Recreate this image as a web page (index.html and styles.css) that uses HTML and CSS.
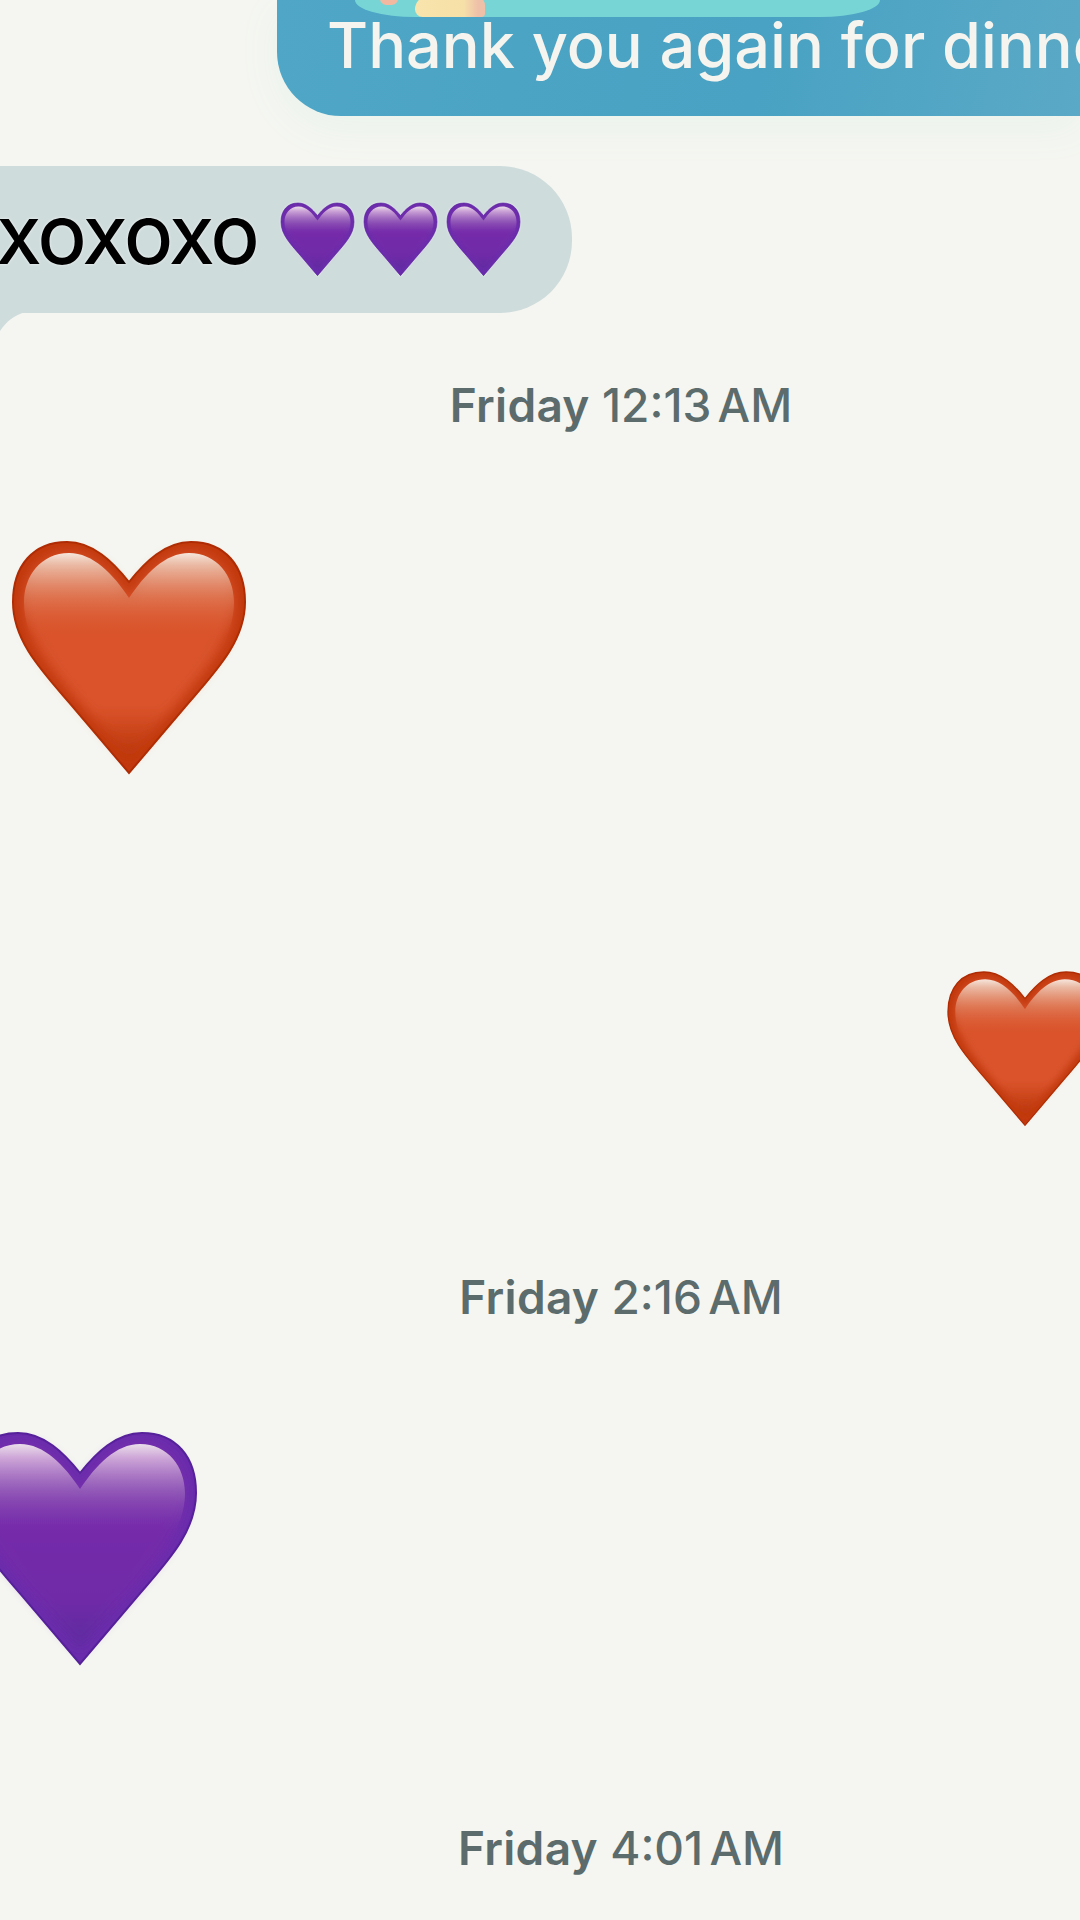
FILE: index.html
```html
<!DOCTYPE html>
<html lang="en">
<head>
<meta charset="utf-8">
<title>Messages</title>
<link rel="stylesheet" href="styles.css">
</head>
<body>
<svg class="defs" width="0" height="0" aria-hidden="true">
  <defs>
    <path id="outer" d="M116 40C100 20 80 0 54 0C20 0 0 24 0 60C0 100 30 130 60 165L116 231L172 165C202 130 232 100 232 60C232 24 212 0 178 0C152 0 132 20 116 40Z"/>
    <path id="inner" d="M116 56C100 32 80 11 56 11C28 11 11 34 11 60C11 96 36 124 64 158L116 216L168 158C196 124 221 96 221 60C221 34 204 11 176 11C152 11 132 32 116 56Z"/>
    <filter id="soft" x="-10%" y="-10%" width="120%" height="120%"><feGaussianBlur stdDeviation="6"/></filter>
    <linearGradient id="red-base" x1="0" y1="0" x2="0" y2="1">
      <stop offset="0" stop-color="#d9532a"/>
      <stop offset=".76" stop-color="#da532a"/>
      <stop offset="1" stop-color="#b83408"/>
    </linearGradient>
    <linearGradient id="red-shine" x1="0" y1="0" x2="0" y2="1">
      <stop offset="0" stop-color="#f6e6dc"/>
      <stop offset=".06" stop-color="#ecc4b0" stop-opacity=".9"/>
      <stop offset=".2" stop-color="#e28c6c" stop-opacity=".65"/>
      <stop offset=".42" stop-color="#d9532a" stop-opacity="0"/>
    </linearGradient>
    <linearGradient id="purple-base" x1="0" y1="0" x2="0" y2="1">
      <stop offset="0" stop-color="#7a30ac"/>
      <stop offset=".76" stop-color="#7029a8"/>
      <stop offset="1" stop-color="#5c2a9e"/>
    </linearGradient>
    <linearGradient id="purple-shine" x1="0" y1="0" x2="0" y2="1">
      <stop offset="0" stop-color="#ebdfea"/>
      <stop offset=".07" stop-color="#d6b2dc" stop-opacity=".9"/>
      <stop offset=".22" stop-color="#a474c0" stop-opacity=".65"/>
      <stop offset=".44" stop-color="#7c34ac" stop-opacity="0"/>
    </linearGradient>
    <symbol id="heart-red" viewBox="0 0 232 232" overflow="visible">
      <use href="#outer" fill="#c2390e" stroke="#ae2c04" stroke-width="2"/>
      <use href="#inner" fill="url(#red-base)" filter="url(#soft)"/>
      <use href="#inner" fill="url(#red-shine)"/>
    </symbol>
    <symbol id="heart-purple" viewBox="0 0 232 232" overflow="visible">
      <use href="#outer" fill="#6a2cac" stroke="#55229a" stroke-width="2"/>
      <use href="#inner" fill="url(#purple-base)" filter="url(#soft)"/>
      <use href="#inner" fill="url(#purple-shine)"/>
    </symbol>
  </defs>
</svg>

<main class="screen">
  <section class="bubble-sent">
    <div class="attachment">
      <span class="attachment-peach"></span>
      <span class="attachment-cream"></span>
    </div>
    <p class="sent-text">Thank you again for dinner</p>
  </section>

  <section class="bubble-received">
    <span class="received-text">XOXOXO</span>
    <span class="inline-hearts">
      <svg class="heart-small"><use href="#heart-purple"/></svg>
      <svg class="heart-small"><use href="#heart-purple"/></svg>
      <svg class="heart-small"><use href="#heart-purple"/></svg>
    </span>
    <svg class="bubble-tail" viewBox="0 0 26 19"><path d="M26 0C14 3 6 10 0 19V0Z"/></svg>
  </section>

  <p class="time time-first"><b>Friday</b> 12:13 <span class="meridiem">AM</span></p>

  <svg class="heart-large heart-large-left"><use href="#heart-red"/></svg>
  <svg class="heart-medium"><use href="#heart-red"/></svg>

  <p class="time time-second"><b>Friday</b> 2:16 <span class="meridiem">AM</span></p>

  <svg class="heart-large heart-large-purple"><use href="#heart-purple"/></svg>

  <p class="time time-third"><b>Friday</b> 4:01 <span class="meridiem">AM</span></p>
</main>
</body>
</html>
```
FILE: styles.css
```css
* { box-sizing: border-box; }

html, body {
  margin: 0;
  padding: 0;
  background: #f5f6f1;
}

body {
  width: 1080px;
  height: 1920px;
  overflow: hidden;
  font-family: Inter, "Liberation Sans", sans-serif;
}

.defs { display: block; height: 0; }

.screen {
  width: 1080px;
  height: 1920px;
  overflow: hidden;
  display: flex;
  flex-direction: column;
  align-items: flex-start;
}

.bubble-sent {
  width: 803px;
  height: 116px;
  margin-left: 277px;
  flex: none;
  overflow: hidden;
  border-radius: 0 0 0 64px;
  background: linear-gradient(100deg, #4fa6c6 0%, #49a2c3 60%, #5aa9c6 100%);
  box-shadow: 0 12px 40px rgba(120, 200, 190, .08);
}

.attachment {
  position: relative;
  width: 525px;
  height: 17px;
  margin-left: 78px;
  border-radius: 0 0 60px 60px / 0 0 17px 17px;
  background: #78d5d6;
  overflow: hidden;
}

.attachment-peach {
  position: absolute;
  left: 25px;
  top: -8px;
  width: 18px;
  height: 13px;
  border-radius: 8px;
  background: #f2b9a0;
}

.attachment-cream {
  position: absolute;
  left: 60px;
  top: -4px;
  width: 70px;
  height: 21px;
  border-radius: 14px 10px 4px 8px;
  background: linear-gradient(90deg, #f8e4ac 0%, #f6e0a8 70%, #eec0a8 90%);
}

.sent-text {
  margin: 0 0 0 50px;
  font-size: 63px;
  font-weight: 500;
  line-height: 56px;
  white-space: nowrap;
  color: #f6f4ee;
}

.bubble-received {
  position: relative;
  flex: none;
  display: flex;
  align-items: center;
  justify-content: flex-end;
  width: 672px;
  height: 147px;
  margin: 50px 0 0 -100px;
  padding-right: 52px;
  border-radius: 72px;
  background: #cfdcdc;
}

.received-text {
  font-size: 62px;
  font-weight: 600;
  color: #000;
  white-space: nowrap;
  text-shadow: 0 0 3px #f2f6f6;
  margin-right: 22px;
  margin-top: 4px;
}

.inline-hearts {
  display: flex;
  gap: 10px;
  margin-top: 0;
}

.heart-small {
  width: 73px;
  height: 73px;
  display: block;
  overflow: visible;
  filter: drop-shadow(0 0 1px #f4f8f8);
}

.bubble-tail {
  position: absolute;
  left: 100px;
  bottom: -18px;
  width: 26px;
  height: 19px;
  fill: #cfdcdc;
}

.time {
  align-self: stretch;
  margin: 0;
  padding-left: 162px;
  text-align: center;
  font-size: 46px;
  font-weight: 500;
  line-height: 48px;
  color: #5c6b6b;
  white-space: nowrap;
}

.time b {
  font-weight: 600;
  letter-spacing: .3px;
}

.meridiem { margin-left: -6px; }

.time-first { margin-top: 68px; }

.heart-large,
.heart-medium {
  display: block;
  flex: none;
  overflow: visible;
}

.heart-large {
  width: 232px;
  height: 232px;
}

.heart-large-left {
  margin: 113px 0 0 13px;
}

.heart-medium {
  width: 154px;
  height: 154px;
  margin: 198px 0 0 948px;
}

.time-second { margin-top: 147px; }

.heart-large-purple {
  margin: 112px 0 0 -36px;
}

.time-third { margin-top: 159px; }
```
